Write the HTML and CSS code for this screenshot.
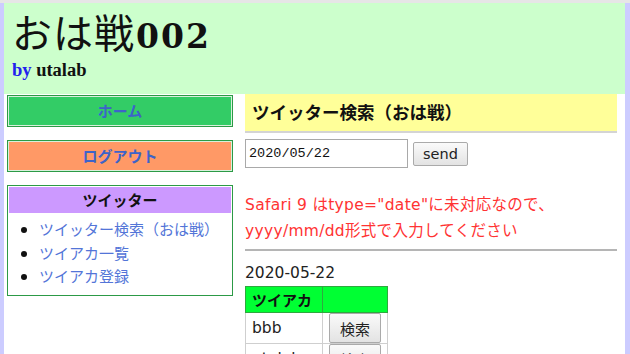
FILE: index.html
```html
<!DOCTYPE html>
<html lang="ja">
<head>
<meta charset="utf-8">
<title>おは戦002</title>
<link rel="stylesheet" href="styles.css">
</head>
<body>
<div class="page">
  <header class="site-header">
    <h1 class="site-title">おは戦<span class="num">002</span></h1>
    <p class="byline"><span class="by">by</span> utalab</p>
  </header>
  <div class="layout">
    <aside class="sidebar">
      <a class="menu-btn home" href="#">ホーム</a>
      <a class="menu-btn logout" href="#">ログアウト</a>
      <div class="menu-box">
        <div class="menu-box-title">ツイッター</div>
        <ul class="menu-list">
          <li><a href="#">ツイッター検索（おは戦）</a></li>
          <li><a href="#">ツイアカ一覧</a></li>
          <li><a href="#">ツイアカ登録</a></li>
        </ul>
      </div>
    </aside>
    <main class="main">
      <h2 class="page-title">ツイッター検索（おは戦）</h2>
      <form class="search-form">
        <input class="date-input" type="text" value="2020/05/22">
        <button class="btn" type="button">send</button>
      </form>
      <p class="notice">Safari 9 はtype="date"に未対応なので、<br>yyyy/mm/dd形式で入力してください</p>
      <hr class="rule">
      <p class="date">2020-05-22</p>
      <table class="accounts">
        <tr><th class="col-name">ツイアカ</th><th class="col-act"></th></tr>
        <tr><td>bbb</td><td><button class="btn small" type="button">検索</button></td></tr>
        <tr><td>utalab</td><td><button class="btn small" type="button">検索</button></td></tr>
      </table>
    </main>
  </div>
</div>
</body>
</html>
```
FILE: styles.css
```css
html, body {
  margin: 0;
  padding: 0;
}
body {
  background: #ccccff;
  border-top: 3px solid #e6e6e6;
  font-family: "DejaVu Sans", "Noto Sans CJK JP", sans-serif;
  color: #333;
}
.page {
  margin-left: 4px;
  width: 621px;
  background: #fff;
  min-height: 400px;
}
.site-header {
  background: #ccffcc;
  height: 91px;
  padding: 6px 0 0 8px;
  box-sizing: border-box;
}
.site-title {
  margin: 0;
  font-family: "Noto Sans CJK JP", serif;
  font-weight: normal;
  font-size: 40px;
  line-height: 44px;
  color: #111;
  letter-spacing: 1px;
}
.site-title .num {
  font-family: "DejaVu Serif", serif;
  font-weight: bold;
  font-size: 33px;
  letter-spacing: 2px;
  margin-left: 1px;
}
.byline {
  margin: 0;
  font-family: "Liberation Serif", serif;
  font-weight: bold;
  font-size: 18.5px;
  line-height: 22px;
  color: #111;
}
.byline .by {
  color: #2222ee;
}
.layout {
  display: flex;
  gap: 12px;
  padding: 0 8px 0 3px;
}
.sidebar {
  width: 226px;
  flex: none;
  display: flex;
  flex-direction: column;
  gap: 13px;
  padding-top: 1px;
}
.menu-btn {
  display: block;
  border: 1px solid #2c9a46;
  box-shadow: inset 0 0 0 1px #d8f0dc;
  height: 32px;
  box-sizing: border-box;
  text-align: center;
  line-height: 30px;
  font-family: "Noto Sans CJK JP", sans-serif;
  font-weight: bold;
  font-size: 15px;
  color: #3d63c9;
  text-decoration: none;
}
.home { background: #33cc66; }
.logout { background: #ff9966; }
.menu-box {
  border: 1px solid #2c9a46;
  padding: 1px;
}
.menu-box-title {
  background: #cc99ff;
  text-align: center;
  font-family: "Noto Sans CJK JP", sans-serif;
  font-weight: bold;
  font-size: 15px;
  line-height: 26px;
  color: #111;
}
.menu-list {
  margin: 4px 0 0;
  padding: 0 0 6px 30px;
  font-family: "Noto Sans CJK JP", sans-serif;
  font-size: 15px;
  line-height: 23.5px;
  color: #111;
}
.menu-list a {
  color: #5375d8;
  text-decoration: none;
}
.main {
  flex: 1;
  min-width: 0;
}
.page-title {
  margin: 0;
  background: #ffff99;
  border-bottom: 2px solid #d4d4d4;
  height: 39px;
  box-sizing: border-box;
  padding-left: 7px;
  font-family: "Noto Sans CJK JP", sans-serif;
  font-weight: bold;
  font-size: 17.5px;
  line-height: 36px;
  color: #111;
}
.search-form {
  margin: 6px 0 0;
  display: flex;
  align-items: center;
  gap: 5px;
}
.date-input {
  width: 163px;
  height: 29px;
  box-sizing: border-box;
  border: 1px solid #a9a9a9;
  padding: 0 3px;
  font-family: "Liberation Mono", monospace;
  font-size: 13.5px;
  color: #111;
}
.btn {
  font-family: "DejaVu Sans", "Noto Sans CJK JP", sans-serif;
  font-size: 14.5px;
  color: #222;
  background: linear-gradient(#fafafa, #e3e3e3);
  border: 1px solid #aaa;
  border-radius: 2px;
  height: 24px;
  width: 55px;
  padding: 0;
}
.notice {
  margin: 24px 0 0;
  color: #ff3333;
  font-size: 15.5px;
  line-height: 26px;
  letter-spacing: 0.3px;
}
.rule {
  margin: 5px 0 0;
  border: 0;
  border-top: 2px solid #b5b5b5;
  height: 0;
}
.date {
  margin: 12px 0 0;
  font-size: 15.5px;
  line-height: 20px;
  color: #222;
}
.accounts {
  margin-top: 3px;
  border-collapse: collapse;
}
.accounts th, .accounts td {
  border: 1px solid #cfcfcf;
  padding: 0 6px;
  text-align: left;
}
.accounts th {
  background: #00ff33;
  border-color: #2fa83f;
  font-family: "Noto Sans CJK JP", sans-serif;
  font-size: 15px;
  height: 25px;
  line-height: 25px;
  color: #111;
}
.col-name { width: 64px; }
.col-act { width: 52px; }
.accounts td {
  height: 30px;
  font-size: 15.5px;
  color: #222;
}
.btn.small {
  width: 52px;
  height: 30px;
  font-family: "Noto Sans CJK JP", sans-serif;
  font-size: 15px;
  display: block;
}
```
